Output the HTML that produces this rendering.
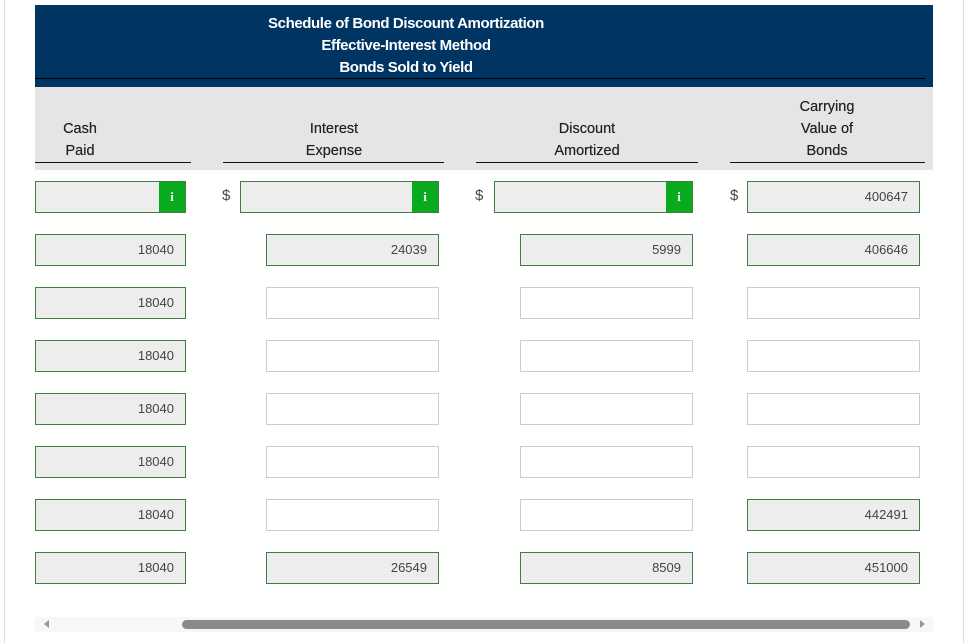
<!DOCTYPE html>
<html><head><style>
html,body{margin:0;width:967px;height:643px;overflow:hidden}
body{background:#fff;position:relative;font-family:"Liberation Sans",sans-serif}
.a{position:absolute}
.frame{left:4px;top:-2px;width:958px;height:655px;border:1px solid #ddd}
.hd{left:35px;top:5px;width:898px;height:82px;background:#003462}
.t{color:#fff;font-weight:bold;font-size:15px;letter-spacing:-0.4px;width:100%;text-align:center;line-height:22px}
.band{left:35px;top:87px;width:898px;height:83px;background:#e5e5e5}
.ch{color:#222;font-size:14.5px;line-height:22px;text-align:center;text-shadow:0 0 0.4px #222}
.ul{height:0;border-top:1.5px solid #111;top:162px}
.box{height:30px;border:1px solid #3f7f3f;background:#ededed;box-sizing:content-box;font-size:13px;color:#444;text-align:right;line-height:30px}
.box span{padding-right:11px}
.e{background:#fff;border-color:#ccc}
.i{right:0;top:0;width:26px;height:30px;background:#0aaa1e;color:#fff;font-weight:bold;text-align:center;line-height:30px;font-size:13px;font-family:"Liberation Serif",serif}
.d{font-size:15px;color:#444;top:187px}
</style></head><body>
<div class="a frame"></div>
<div class="a hd">
 <div class="a t" style="top:8px;left:-78px">Schedule of Bond Discount Amortization</div>
 <div class="a t" style="top:30px;left:-78px">Effective-Interest Method</div>
 <div class="a t" style="top:52px;left:-78px">Bonds Sold to Yield</div>
 <div class="a" style="left:0;top:73px;width:890px;border-top:1px solid #000"></div>
</div>
<div class="a band"></div>
<div class="a ch" style="left:50px;top:118px;width:60px">Cash<br>Paid</div>
<div class="a ch" style="left:284px;top:118px;width:100px">Interest<br>Expense</div>
<div class="a ch" style="left:537px;top:118px;width:100px">Discount<br>Amortized</div>
<div class="a ch" style="left:777px;top:96px;width:100px">Carrying<br>Value of<br>Bonds</div>
<div class="a ul" style="left:35px;width:156px"></div>
<div class="a ul" style="left:223px;width:221px"></div>
<div class="a ul" style="left:476px;width:222px"></div>
<div class="a ul" style="left:730px;width:195px"></div>

<div class="a d" style="left:222px">$</div>
<div class="a d" style="left:475px">$</div>
<div class="a d" style="left:730px">$</div>
<div class="a box" style="left:35px;top:181px;width:149px"><div class="a i">i</div></div>
<div class="a box" style="left:240px;top:181px;width:197px"><div class="a i">i</div></div>
<div class="a box" style="left:494px;top:181px;width:197px"><div class="a i">i</div></div>
<div class="a box" style="left:747px;top:181px;width:171px"><span>400647</span></div>

<div class="a box" style="left:35px;top:234px;width:149px"><span>18040</span></div>
<div class="a box" style="left:266px;top:234px;width:171px"><span>24039</span></div>
<div class="a box" style="left:520px;top:234px;width:171px"><span>5999</span></div>
<div class="a box" style="left:747px;top:234px;width:171px"><span>406646</span></div>

<div class="a box" style="left:35px;top:287px;width:149px"><span>18040</span></div>
<div class="a box e" style="left:266px;top:287px;width:171px"></div>
<div class="a box e" style="left:520px;top:287px;width:171px"></div>
<div class="a box e" style="left:747px;top:287px;width:171px"></div>

<div class="a box" style="left:35px;top:340px;width:149px"><span>18040</span></div>
<div class="a box e" style="left:266px;top:340px;width:171px"></div>
<div class="a box e" style="left:520px;top:340px;width:171px"></div>
<div class="a box e" style="left:747px;top:340px;width:171px"></div>

<div class="a box" style="left:35px;top:393px;width:149px"><span>18040</span></div>
<div class="a box e" style="left:266px;top:393px;width:171px"></div>
<div class="a box e" style="left:520px;top:393px;width:171px"></div>
<div class="a box e" style="left:747px;top:393px;width:171px"></div>

<div class="a box" style="left:35px;top:446px;width:149px"><span>18040</span></div>
<div class="a box e" style="left:266px;top:446px;width:171px"></div>
<div class="a box e" style="left:520px;top:446px;width:171px"></div>
<div class="a box e" style="left:747px;top:446px;width:171px"></div>

<div class="a box" style="left:35px;top:499px;width:149px"><span>18040</span></div>
<div class="a box e" style="left:266px;top:499px;width:171px"></div>
<div class="a box e" style="left:520px;top:499px;width:171px"></div>
<div class="a box" style="left:747px;top:499px;width:171px"><span>442491</span></div>

<div class="a box" style="left:35px;top:552px;width:149px"><span>18040</span></div>
<div class="a box" style="left:266px;top:552px;width:171px"><span>26549</span></div>
<div class="a box" style="left:520px;top:552px;width:171px"><span>8509</span></div>
<div class="a box" style="left:747px;top:552px;width:171px"><span>451000</span></div>

<div class="a" style="left:35px;top:617px;width:898px;height:15px;background:#f7f7f7"></div>
<div class="a" style="left:182px;top:620px;width:728px;height:9px;background:#8a8a8a;border-radius:5px"></div>
<div class="a" style="left:44px;top:620px;width:0;height:0;border-top:4px solid transparent;border-bottom:4px solid transparent;border-right:5px solid #999"></div>
<div class="a" style="left:920px;top:620px;width:0;height:0;border-top:4px solid transparent;border-bottom:4px solid transparent;border-left:5px solid #999"></div>
</body></html>
